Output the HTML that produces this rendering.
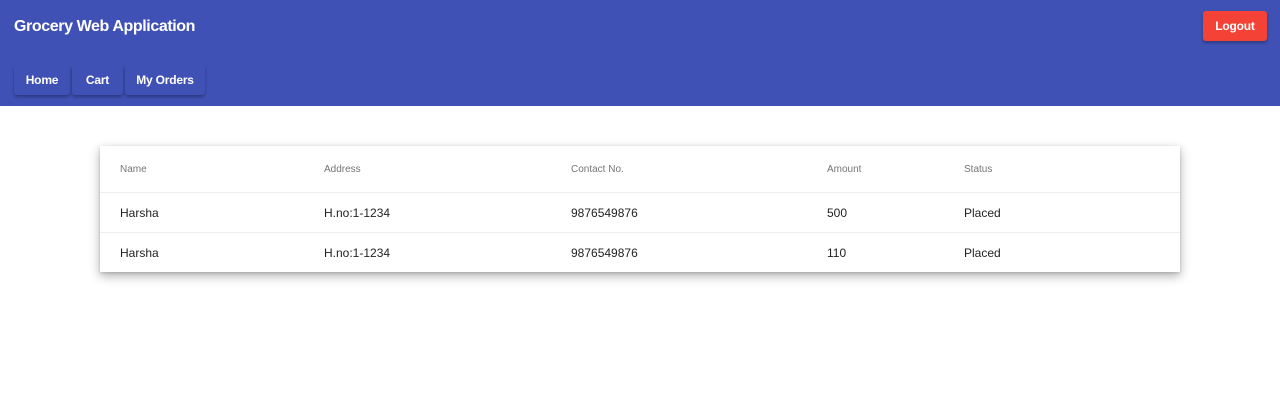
<!DOCTYPE html>
<html><head><meta charset="utf-8"><style>
body{margin:0;width:1280px;height:409px;background:#fff;font-family:"Liberation Sans",sans-serif;overflow:hidden;position:relative}
.bar{position:absolute;left:0;top:0;width:1280px;height:106px;background:#3f51b5}
.title{position:absolute;left:14px;top:17px;color:#fff;font-size:16px;font-weight:bold;line-height:20px;letter-spacing:-0.4px}
.btn{position:absolute;top:65px;height:30px;line-height:30px;background:#3f51b5;color:#fff;font-size:12px;font-weight:bold;text-align:center;border-radius:3px;box-shadow:0 2px 3px rgba(0,0,0,.3);letter-spacing:-0.2px}
.logout{position:absolute;left:1203px;top:11px;width:64px;height:30px;line-height:30px;background:#f44336;color:#fff;font-size:12px;font-weight:bold;text-align:center;border-radius:3px;box-shadow:0 2px 3px rgba(0,0,0,.3);letter-spacing:-0.2px}
.card{position:absolute;left:100px;top:146px;width:1080px;height:126px;background:#fff;box-shadow:0 4px 10px rgba(0,0,0,.3),0 1px 3px rgba(0,0,0,.15)}
.row{position:absolute;left:0;width:1080px;border-bottom:1px solid #eee}
.row span{position:absolute;top:0}
.h{top:0;height:46px;line-height:47px;font-size:10px;color:#757575}
.r{height:39px;line-height:41px;font-size:12px;color:#222}
</style></head><body>
<div class="bar"></div>
<div class="title">Grocery Web Application</div>
<div class="btn" style="left:14px;width:56px">Home</div>
<div class="btn" style="left:72px;width:51px">Cart</div>
<div class="btn" style="left:125px;width:80px">My Orders</div>
<div class="logout">Logout</div>
<div class="card">
<div class="row h"><span style="left:20px">Name</span><span style="left:224px">Address</span><span style="left:471px">Contact No.</span><span style="left:727px">Amount</span><span style="left:864px">Status</span></div>
<div class="row r" style="top:47px"><span style="left:20px">Harsha</span><span style="left:224px">H.no:1-1234</span><span style="left:471px">9876549876</span><span style="left:727px">500</span><span style="left:864px">Placed</span></div>
<div class="row r" style="top:87px;border-bottom:none"><span style="left:20px">Harsha</span><span style="left:224px">H.no:1-1234</span><span style="left:471px">9876549876</span><span style="left:727px">110</span><span style="left:864px">Placed</span></div>
</div>
</body></html>
